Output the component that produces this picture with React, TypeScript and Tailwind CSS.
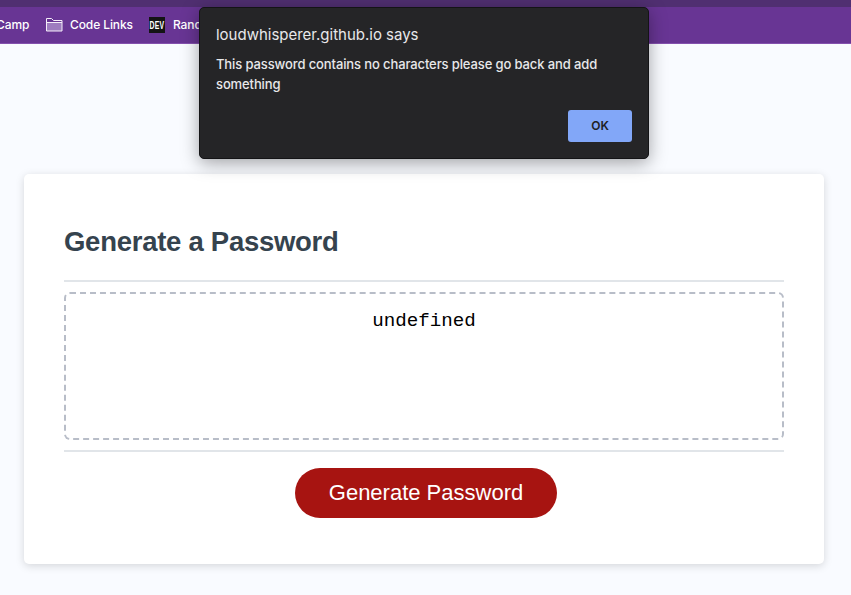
function FolderIcon() {
  return (
    <svg width="17" height="14" viewBox="0 0 17 14" fill="none" className="shrink-0">
      <path d="M1 5h15v8H1z" fill="#9e7cbf" />
      <path d="M.5 13V.5h5l2 2h8.500V13zM.5 4.500h15.500" stroke="#f3edf8" strokeLinejoin="round" />
    </svg>
  );
}

function BookmarksBar() {
  return (
    <header className="h-11 bg-[#683594] font-['Inter',sans-serif] text-white">
      <div className="h-[7px] bg-[#502f71]" />
      <div className="flex h-[37px] items-center overflow-hidden border-b border-[#8450ae] pb-px text-[12px] leading-4 font-medium tracking-[-0.1px] whitespace-nowrap">
        <span className="-ml-[4px] w-[50px]">Camp</span>
        <FolderIcon />
        <span className="ml-[7px] w-[79px]">Code Links</span>
        <span className="size-4 bg-[#141414]">
          <svg width="16" height="16" viewBox="0 0 16 16">
            <text x="0.500" y="12" textLength="15" lengthAdjust="spacingAndGlyphs" fill="#fff" fontSize="11" fontWeight="700" letterSpacing="0.500" fontFamily="Liberation Sans, sans-serif">DEV</text>
          </svg>
        </span>
        <span className="ml-2">Random</span>
      </div>
    </header>
  );
}

function AlertDialog() {
  return (
    <section role="alertdialog" className="absolute top-[7px] left-[199px] flex h-[152px] w-[450px] flex-col rounded-[5px] border border-[#141416] bg-[#252527] px-4 pt-[17px] font-['Inter',sans-serif] text-[#e8e8ea] shadow-[0_4px_18px_rgba(0,0,0,0.36)]">
      <h2 className="text-[15px] leading-5 tracking-[-0.01px] whitespace-nowrap">loudwhisperer.github.io says</h2>
      <p className="mt-[9px] text-[13px] leading-5 font-medium tracking-[-0.115px]">
        This password contains no characters please go back and add
        <br />
        something
      </p>
      <button className="mt-4 h-8 w-16 self-end rounded-[3px] bg-[#82a7f8] text-[12px] font-semibold text-[#202124]">OK</button>
    </section>
  );
}

export default function App() {
  return (
    <div className="relative h-[595px] w-[851px] overflow-hidden bg-[#f9fbff] font-['Liberation_Sans',Arial,sans-serif]">
      <BookmarksBar />
      <main className="mt-[130px] ml-6 h-[390px] w-[800px] rounded-[5px] bg-white px-10 pt-[48px] shadow-[0_2px_8px_rgba(0,0,0,0.15)]">
        <h1 className="h-[60px] border-b-2 border-[#e1e5e9] text-[27.500px] leading-10 font-bold tracking-[-0.270px] text-[#35434e]">Generate a Password</h1>
        <div className="mt-[10px] h-[148px] rounded-md border-2 border-dashed border-[#b8bdc8] pt-4 text-center font-['Liberation_Mono','Courier_New',monospace] text-[19.200px] leading-[22px] text-black">
          undefined
        </div>
        <div className="mt-[10px] border-t-2 border-[#e1e5e9] pt-4">
          <button className="ml-[231px] h-[50px] w-[262px] rounded-full bg-[#a71411] pb-[2px] text-[22px] text-white">Generate Password</button>
        </div>
      </main>
      <AlertDialog />
    </div>
  );
}
